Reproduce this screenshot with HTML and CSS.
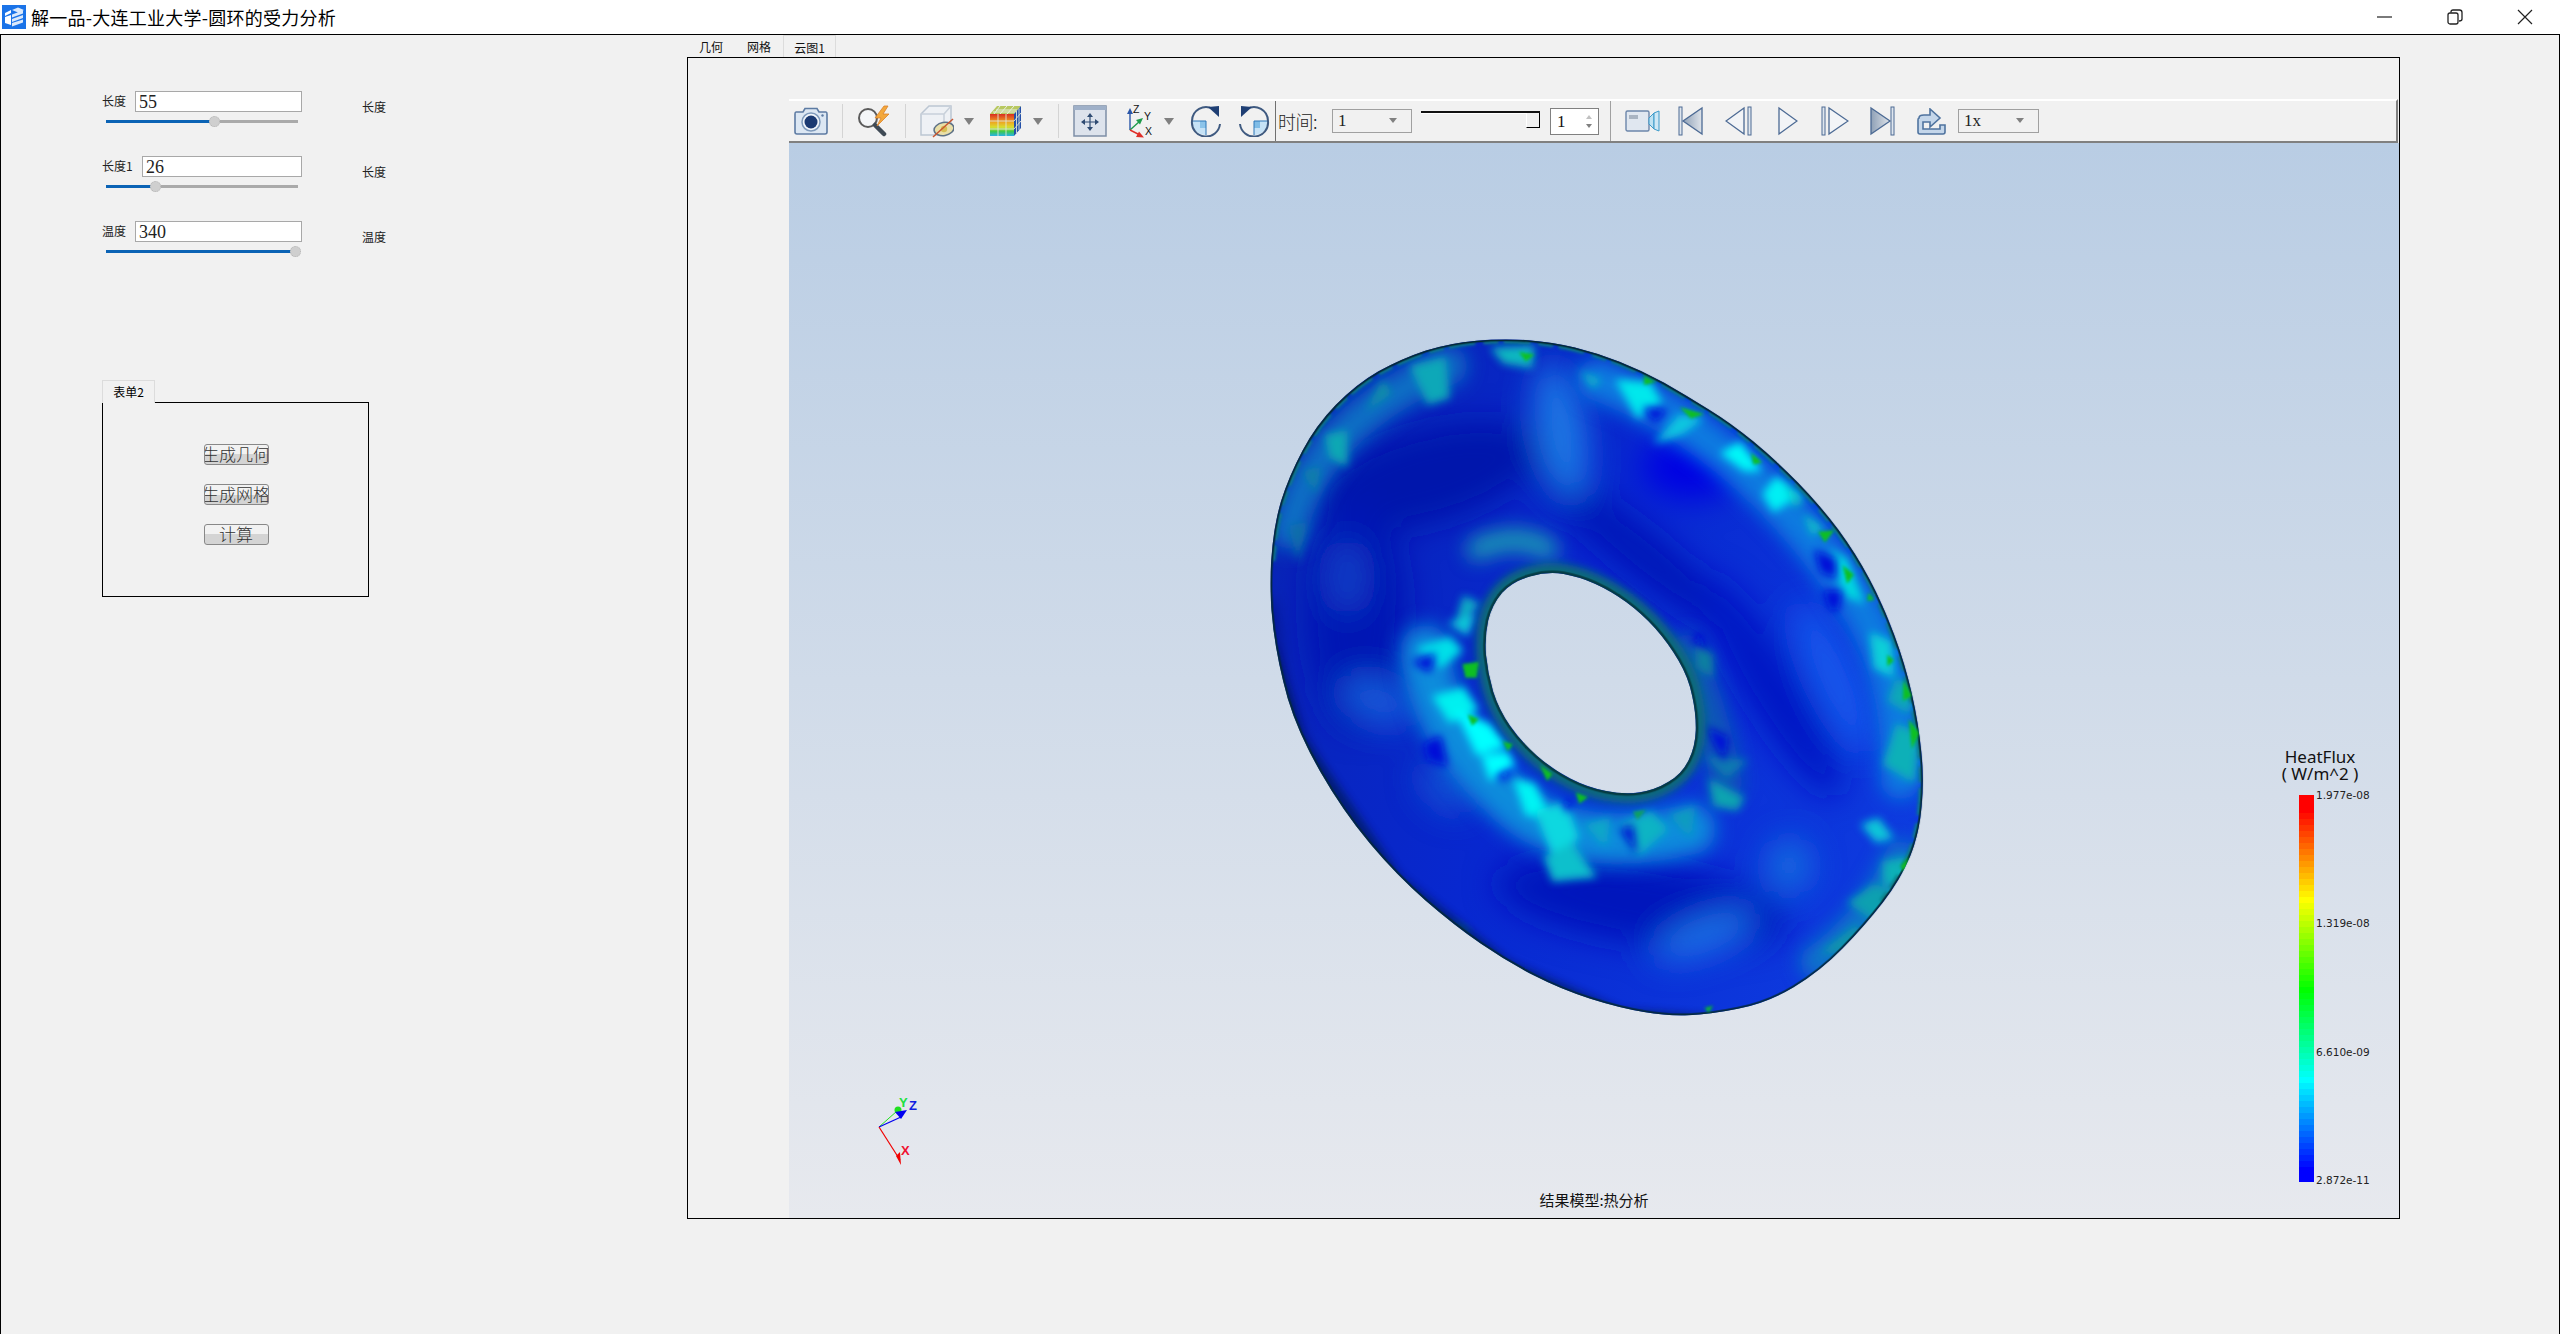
FILE: index.html
```html
<!DOCTYPE html>
<html lang="zh-CN">
<head>
<meta charset="utf-8">
<title>解一品-大连工业大学-圆环的受力分析</title>
<link rel="stylesheet" href="styles.css">
</head>
<body>
<header class="titlebar">
  <svg class="app-icon" width="24" height="24" viewBox="0 0 24 24">
    <rect width="24" height="24" fill="#1a73e8"/>
    <path d="M3 8 L9 5 L9 8 L3 11Z M3 12 L9 10 L9 20 L3 18Z" fill="#fff"/>
    <path d="M10 5 L16 2.500 L22 5 L16 7.500Z M10 9.500 L21 5.500 L21 8.500 L10 12.500Z M10 14 L21 10 L21 13 L10 17Z M10 18 L21 14.500 L21 17.500 L10 21.500Z" fill="#dbe9fb"/>
  </svg>
  <span class="app-title">解一品-大连工业大学-圆环的受力分析</span>
  <div class="win-controls">
    <button class="win-btn" aria-label="最小化"><svg width="16" height="16" viewBox="0 0 16 16"><path d="M0 8H15" stroke="#222" stroke-width="1.200"/></svg></button>
    <button class="win-btn" aria-label="还原"><svg width="16" height="16" viewBox="0 0 16 16" fill="none" stroke="#222" stroke-width="1.300"><rect x="1" y="4" width="10" height="11" rx="2"/><path d="M4 3.500V2.800Q4 1 6 1H12.500Q15 1 15 3.500V10Q15 12 12 12"/></svg></button>
    <button class="win-btn" aria-label="关闭"><svg width="16" height="16" viewBox="0 0 16 16"><path d="M1 1L15 15M15 1L1 15" stroke="#222" stroke-width="1.200"/></svg></button>
  </div>
</header>

<main class="client">
  <section class="side">
    <div class="params">
      <div class="param">
        <div class="param-main">
          <div class="param-input"><label class="param-label">长度</label><span class="value-box">55</span></div>
          <div class="slider"><div class="slider-fill" style="width:56.3%"></div><div class="slider-thumb" style="left:56.3%"></div></div>
        </div>
        <span class="param-unit">长度</span>
      </div>
      <div class="param">
        <div class="param-main">
          <div class="param-input"><label class="param-label param-label-wide">长度1</label><span class="value-box">26</span></div>
          <div class="slider"><div class="slider-fill" style="width:25.5%"></div><div class="slider-thumb" style="left:25.5%"></div></div>
        </div>
        <span class="param-unit">长度</span>
      </div>
      <div class="param">
        <div class="param-main">
          <div class="param-input"><label class="param-label">温度</label><span class="value-box">340</span></div>
          <div class="slider"><div class="slider-fill" style="width:98.4%"></div><div class="slider-thumb" style="left:98.4%"></div></div>
        </div>
        <span class="param-unit">温度</span>
      </div>
    </div>

    <div class="form">
      <div class="form-tab">表单2</div>
      <div class="form-box">
        <button class="action">生成几何</button>
        <button class="action">生成网格</button>
        <button class="action">计算</button>
      </div>
    </div>
  </section>

  <section class="workspace">
    <nav class="tabs">
      <span class="tab">几何</span>
      <span class="tab">网格</span>
      <span class="tab tab-active">云图1</span>
    </nav>
    <div class="tab-box">
      <div class="toolbar">
        <svg class="ico ml5" width="34" height="28" viewBox="0 0 34 28">
          <path d="M2 5H9L11 1.500H23L25 5H32Q33 5 33 7V25Q33 27 31 27H3Q1 27 1 25V7Q1 5 2 5Z" fill="#dce7f3" stroke="#5d7ba3" stroke-width="1.600"/>
          <circle cx="17" cy="15" r="9" fill="#f2f6fb" stroke="#7f9abb" stroke-width="1.500"/>
          <circle cx="17" cy="15" r="6.500" fill="#1b3a72"/>
          <circle cx="28.500" cy="8.500" r="1.200" fill="#5d7ba3"/>
        </svg>
        <i class="sep ml14"></i>
        <svg class="ico ml14" width="35" height="32" viewBox="0 0 35 32">
          <circle cx="11" cy="13" r="9" fill="#f4f6f8" stroke="#5b5b5b" stroke-width="2"/>
          <path d="M18 20L27 29" stroke="#3f4a55" stroke-width="4.500" stroke-linecap="round"/>
          <path d="M27 1L18 13H24L20 21L32 9H26L31 1Z" fill="#f3a83c" stroke="#d9822b" stroke-width=".8"/>
        </svg>
        <i class="sep ml13"></i>
        <svg class="ico ml14" width="34" height="34" viewBox="0 0 34 34">
          <path d="M1 10L9 2H31V24L24 31H1Z" fill="#eef1f5" stroke="#bcc6d2" stroke-width="1.500"/>
          <path d="M1 10H24V31M24 10L31 2" fill="none" stroke="#c8d0da" stroke-width="1.500"/>
          <ellipse cx="24" cy="25" rx="10" ry="6.500" transform="rotate(-10 24 25)" fill="#e9dfa8" stroke="#5d7186" stroke-width="1.500"/>
          <circle cx="24" cy="25" r="3.200" fill="#d7bd54"/>
          <path d="M13 33L33 15" stroke="#c9552f" stroke-width="1.500"/>
        </svg>
        <i class="drop ml10"></i>
        <svg class="ico ml15" width="33" height="32" viewBox="0 0 33 32">
          <defs>
            <linearGradient id="rainbow" x1="0" x2="0" y1="0" y2="1">
              <stop offset="0" stop-color="#d92d20"/><stop offset=".35" stop-color="#f0a020"/><stop offset=".6" stop-color="#d8df30"/><stop offset=".8" stop-color="#3cc850"/><stop offset="1" stop-color="#28b0e8"/>
            </linearGradient>
          </defs>
          <path d="M1 9L8 1H32L25 9Z" fill="#b8c860"/>
          <path d="M7 5H28M4 7H27M11 1L5 9M18 1L11 9M25 1L18 9" stroke="#e8efe0" fill="none"/>
          <rect x="1" y="9" width="24" height="22" fill="url(#rainbow)"/>
          <path d="M25 9L32 1V23L25 31Z" fill="#2450a8"/>
          <path d="M9 9V31M17 9V31M1 16H25M1 24H25M25 16L32 8M25 24L32 16M27.500 6V28M30 3.500V25" stroke="#dce6d6" stroke-width=".9" fill="none"/>
        </svg>
        <i class="drop ml11"></i>
        <i class="sep ml15"></i>
        <svg class="ico ml14" width="34" height="32" viewBox="0 0 34 32">
          <rect x="1" y="1" width="32" height="30" fill="#dde3ec" stroke="#7d8ea6" stroke-width="1.500"/>
          <rect x="1" y="1" width="32" height="4" fill="#9fb0c8"/>
          <path d="M17 11V23M11 17H23" stroke="#2f4b72" stroke-width="1.200"/>
          <path d="M17 8L14 12H20ZM17 26L14 22H20ZM8 17L12 14V20ZM26 17L22 14V20Z" fill="#2f4b72"/>
        </svg>
        <svg class="ico ml18" width="28" height="34" viewBox="0 0 28 34">
          <path d="M5 26V8" stroke="#2a56a8" stroke-width="1.400"/><path d="M5 4L2 10H8Z" fill="#2a56a8"/>
          <path d="M5 26L15 17" stroke="#1e9a4a" stroke-width="1.400"/><path d="M18 14L11 16L15 20.500Z" fill="#1e9a4a"/>
          <path d="M5 26L15 31" stroke="#e0302a" stroke-width="1.400"/><path d="M19 33.500L11 33L14 27.500Z" fill="#e0302a"/>
          <text class="axis-text" x="8" y="9">Z</text><text class="axis-text" x="19" y="16">Y</text><text class="axis-text" x="20" y="31">X</text>
        </svg>
        <i class="drop ml11"></i>
        <svg class="ico ml16" width="32" height="32" viewBox="0 0 32 32">
          <path d="M2 16A14 14 0 0 0 16 30V16Z" fill="#c6e2f6"/>
          <path d="M10 16H16V23H10Z" fill="#8cc4ea"/>
          <path d="M2 16H16V30" fill="none" stroke="#2d77b8" stroke-width="1"/>
          <path d="M23 4A14 14 0 0 0 2 16A14 14 0 0 0 30 19" fill="none" stroke="#3f5a80" stroke-width="2"/>
          <path d="M18 2L29 1L29 12Z" fill="#1f3f74"/>
        </svg>
        <svg class="ico ml16" width="32" height="32" viewBox="0 0 32 32">
          <path d="M30 16A14 14 0 0 1 16 30V16Z" fill="#c6e2f6"/>
          <path d="M16 30V23H22V16H16Z" fill="#7fbce6"/>
          <path d="M30 16H16V30" fill="none" stroke="#2d77b8" stroke-width="1"/>
          <path d="M9 4A14 14 0 0 1 30 16A14 14 0 0 1 2 19" fill="none" stroke="#3f5a80" stroke-width="2"/>
          <path d="M14 2L3 1L3 12Z" fill="#1f3f74"/>
        </svg>
        <i class="vline ml5"></i>
        <span class="time-label ml2">时间:</span>
        <div class="combo combo-time ml11"><span>1</span><i class="drop drop-small"></i></div>
        <div class="track ml9"><i class="track-line"></i><i class="track-handle"></i></div>
        <div class="spin ml10"><span>1</span><span class="spin-arrows"><i class="spin-up"></i><i class="spin-down"></i></span></div>
        <i class="vline vline-light ml11"></i>
        <svg class="ico ml14" width="35" height="24" viewBox="0 0 35 24">
          <rect x="1" y="2" width="23" height="20" rx="1.500" fill="#e0e7f0" stroke="#6c86aa" stroke-width="1.400"/>
          <rect x="4" y="6" width="9" height="4" fill="#a9b4c2"/>
          <path d="M24 9L29 4V20L24 15Z" fill="#bfe2f2" stroke="#3b9ac9"/>
          <path d="M29 4L34 2V22L29 20Z" fill="#cfe8f5" stroke="#3b9ac9"/>
        </svg>
        <svg class="ico ml18" width="25" height="30" viewBox="0 0 25 30">
          <defs><linearGradient id="pb" x1="0" x2="1" y1="0" y2="0"><stop offset="0" stop-color="#8ea0b6"/><stop offset="1" stop-color="#dfe4ea"/></linearGradient></defs>
          <rect x="1" y="1" width="3" height="28" fill="#dfe6ee" stroke="#4c6a94"/><path d="M24 2V28L5 15Z" fill="url(#pb)" stroke="#4c6a94" stroke-width="1.300"/>
        </svg>
        <svg class="ico ml22" width="27" height="30" viewBox="0 0 27 30">
          <path d="M19 2V28L1 15Z" fill="#f2f4f7" stroke="#4c6a94" stroke-width="1.300"/><rect x="23" y="1" width="3" height="28" fill="#dfe6ee" stroke="#4c6a94"/>
        </svg>
        <svg class="ico ml26" width="20" height="30" viewBox="0 0 20 30">
          <path d="M1 2V28L19 15Z" fill="#f2f4f7" stroke="#4c6a94" stroke-width="1.300"/>
        </svg>
        <svg class="ico ml23" width="28" height="30" viewBox="0 0 28 30">
          <rect x="1" y="1" width="3" height="28" fill="#dfe6ee" stroke="#4c6a94"/><path d="M8 2V28L27 15Z" fill="#f2f4f7" stroke="#4c6a94" stroke-width="1.300"/>
        </svg>
        <svg class="ico ml21" width="25" height="30" viewBox="0 0 25 30">
          <path d="M1 2V28L20 15Z" fill="url(#pb)" stroke="#4c6a94" stroke-width="1.300"/><rect x="21" y="1" width="3" height="28" fill="#dfe6ee" stroke="#4c6a94"/>
        </svg>
        <svg class="ico ml22" width="29" height="27" viewBox="0 0 29 27">
          <path d="M2 10Q1 10 1 12V24Q1 26 3 26H26Q28 26 28 24V17H23V21H6V14H13V19L23 10L13 1V7H7Q2 7 2 10Z" fill="#c4d6ea" stroke="#4f739f" stroke-width="1.600"/>
        </svg>
        <div class="combo combo-speed"><span>1x</span><i class="drop drop-small"></i></div>
      </div>

      <div class="viewport">
        <svg class="torus" viewBox="0 0 1568 1570" preserveAspectRatio="none">
          <defs>
            <path id="outer" d="M645 44Q700 48 750 60Q800 72 850 91Q900 110 950 137Q1000 165 1050 195Q1100 225 1150 265Q1200 305 1250 355Q1300 405 1340 457Q1380 510 1410 565Q1440 620 1465 685Q1490 750 1505 815Q1520 880 1526 940Q1533 1000 1527 1060Q1522 1120 1501 1170Q1480 1220 1440 1270Q1400 1320 1350 1370Q1300 1420 1240 1455Q1180 1490 1115 1502Q1050 1515 1005 1516Q960 1518 905 1509Q850 1500 785 1480Q720 1460 660 1430Q600 1400 540 1360Q480 1320 415 1265Q350 1210 290 1140Q230 1070 180 985Q130 900 107 825Q85 750 75 675Q65 600 70 525Q75 450 92 395Q110 340 140 285Q170 230 215 185Q260 140 310 112Q360 85 415 67Q470 50 530 45Q590 40 645 44Z"/>
            <path id="hole" d="M725 554Q760 560 795 575Q830 590 865 615Q900 640 930 672Q960 705 982 742Q1005 780 1013 820Q1022 860 1021 895Q1020 930 1005 960Q990 990 960 1007Q930 1025 895 1030Q860 1035 820 1027Q780 1020 740 1000Q700 980 665 950Q630 920 605 885Q580 850 567 810Q555 770 551 730Q548 690 556 655Q565 620 587 595Q610 570 650 559Q690 548 725 554Z"/>
            <clipPath id="ring"><path clip-rule="evenodd" d="M645 44Q700 48 750 60Q800 72 850 91Q900 110 950 137Q1000 165 1050 195Q1100 225 1150 265Q1200 305 1250 355Q1300 405 1340 457Q1380 510 1410 565Q1440 620 1465 685Q1490 750 1505 815Q1520 880 1526 940Q1533 1000 1527 1060Q1522 1120 1501 1170Q1480 1220 1440 1270Q1400 1320 1350 1370Q1300 1420 1240 1455Q1180 1490 1115 1502Q1050 1515 1005 1516Q960 1518 905 1509Q850 1500 785 1480Q720 1460 660 1430Q600 1400 540 1360Q480 1320 415 1265Q350 1210 290 1140Q230 1070 180 985Q130 900 107 825Q85 750 75 675Q65 600 70 525Q75 450 92 395Q110 340 140 285Q170 230 215 185Q260 140 310 112Q360 85 415 67Q470 50 530 45Q590 40 645 44Z M725 554Q760 560 795 575Q830 590 865 615Q900 640 930 672Q960 705 982 742Q1005 780 1013 820Q1022 860 1021 895Q1020 930 1005 960Q990 990 960 1007Q930 1025 895 1030Q860 1035 820 1027Q780 1020 740 1000Q700 980 665 950Q630 920 605 885Q580 850 567 810Q555 770 551 730Q548 690 556 655Q565 620 587 595Q610 570 650 559Q690 548 725 554Z"/></clipPath>
            <linearGradient id="base" x1="0" y1=".3" x2="1" y2=".7">
              <stop offset="0" stop-color="#0824b4"/><stop offset=".45" stop-color="#0828d0"/><stop offset="1" stop-color="#0e3ce0"/>
            </linearGradient>
            <filter id="b50" x="-50%" y="-50%" width="200%" height="200%"><feGaussianBlur stdDeviation="36"/></filter>
            <filter id="b20" x="-50%" y="-50%" width="200%" height="200%"><feGaussianBlur stdDeviation="22"/></filter>
            <filter id="b8" x="-50%" y="-50%" width="200%" height="200%"><feGaussianBlur stdDeviation="9"/></filter>
            <filter id="b3" x="-50%" y="-50%" width="200%" height="200%"><feGaussianBlur stdDeviation="3"/></filter>
          </defs>
          <g clip-path="url(#ring)">
            <rect width="1568" height="1570" fill="url(#base)"/>
            <g filter="url(#b50)">
              <ellipse cx="420" cy="340" rx="260" ry="100" transform="rotate(-15 420 340)" fill="#0318ac"/>
              <ellipse cx="260" cy="640" rx="110" ry="250" fill="#0418b4"/>
              <ellipse cx="1010" cy="320" rx="110" ry="70" fill="#0006e4"/>
              <ellipse cx="900" cy="510" rx="300" ry="50" transform="rotate(38 900 510)" fill="#0212b8"/>
              <ellipse cx="1190" cy="800" rx="60" ry="280" transform="rotate(-32 1190 800)" fill="#0216c4"/>
              <ellipse cx="900" cy="1270" rx="330" ry="90" transform="rotate(8 900 1270)" fill="#0212bc"/>
              <ellipse cx="720" cy="240" rx="55" ry="150" transform="rotate(-10 720 240)" fill="#1c78e4"/>
              <ellipse cx="1330" cy="780" rx="50" ry="180" transform="rotate(-25 1330 780)" fill="#1658ec"/>
              <ellipse cx="1040" cy="1340" rx="120" ry="40" transform="rotate(-20 1040 1340)" fill="#1a70e4"/>
              <ellipse cx="310" cy="830" rx="90" ry="50" transform="rotate(20 310 830)" fill="#1658d8"/>
              <ellipse cx="1230" cy="1190" rx="50" ry="60" fill="#186ce0"/>
              <ellipse cx="240" cy="560" rx="40" ry="80" fill="#1240c8"/>
              <ellipse cx="460" cy="1020" rx="70" ry="40" transform="rotate(40 460 1020)" fill="#1654d4"/>
            </g>
            <g filter="url(#b20)" fill="none" stroke-linecap="round">
              <path d="M415 720Q430 900 620 1060Q760 1170 1010 1110" stroke="#0e8cdc" stroke-width="110"/>
              <path d="M800 130Q1150 260 1400 640Q1490 800 1480 1000" stroke="#0e7ce0" stroke-width="90"/>
              <path d="M110 460Q170 220 470 100" stroke="#0e70c4" stroke-width="80"/>
              <path d="M1480 1170Q1420 1310 1290 1400" stroke="#0e78c8" stroke-width="70"/>
              <path d="M530 500Q620 460 690 500" stroke="#1a9cb4" stroke-width="46"/>
              <path d="M1000 720Q1060 850 1090 1010" stroke="#0e5ab4" stroke-width="70"/>
            </g>
            <g filter="url(#b8)" fill="#06e0e8">
              <path d="M395 715L470 690L500 720L450 760Z"/>
              <path d="M430 820L500 800L535 850L470 880Z" fill="#04f0f0"/>
              <path d="M480 850L560 880L600 930L530 950Z" fill="#00ffff"/>
              <path d="M540 950L600 940L620 980L560 1005Z" fill="#00ffff"/>
              <path d="M610 1000L660 1010L700 1090L640 1080Z" fill="#00f4f4"/>
              <path d="M660 1070L730 1050L760 1130L700 1170Z" fill="#08d8e0"/>
              <path d="M680 1170L745 1140L800 1215L700 1225Z" fill="#0ac0cc"/>
              <path d="M770 1100L830 1085L820 1150Z" fill="#0aa8c8"/>
              <path d="M850 1100L920 1070L960 1110L890 1170Z" fill="#0cb4c4"/>
              <path d="M960 1080L1020 1060L1010 1130Z" fill="#0c9cc0"/>
              <path d="M1050 1000L1130 1040L1115 1070L1060 1060Z" fill="#10a4b0"/>
              <path d="M1040 950L1140 960L1090 1000Z" fill="#0a7cb0"/>
              <path d="M500 600L540 620L480 670Z" fill="#10b0c4"/>
              <path d="M465 660L530 640L510 690Z" fill="#10c8d8"/>
              <path d="M1020 700L1060 730L1060 780L1020 760Z" fill="#0c80a0"/>
              <path d="M760 110L810 130L790 150Z" fill="#10b4c8"/>
              <path d="M840 130L920 135L945 180L890 215Z" fill="#00e8ec"/>
              <path d="M925 270L985 205L1040 215L990 250Z" fill="#08c8e0"/>
              <path d="M1075 290L1120 265L1170 330L1130 330Z" fill="#00f8f8"/>
              <path d="M1170 380L1200 340L1260 380L1195 420Z" fill="#00f0f4"/>
              <path d="M1220 350L1265 395L1240 410Z" fill="#10c0c8"/>
              <path d="M1260 420L1310 455L1280 470Z" fill="#10c0c8"/>
              <path d="M1320 500L1360 520L1400 620L1350 600Z" fill="#06d8e0"/>
              <path d="M1410 680L1460 700L1465 780L1420 760Z" fill="#08d0d8"/>
              <path d="M1470 780L1510 800L1500 860L1450 830Z" fill="#10a8b8"/>
              <path d="M1470 880L1525 900L1510 1010L1440 970Z" fill="#10b0b8"/>
              <path d="M1390 1100L1430 1085L1465 1130L1425 1140Z" fill="#08c8d8"/>
              <path d="M1440 1180L1500 1170L1500 1240L1440 1230Z" fill="#10b0b8"/>
              <path d="M1360 1270L1420 1230L1480 1250L1420 1310Z" fill="#10a0b0"/>
              <path d="M1300 1380L1380 1320L1400 1340L1340 1380Z" fill="#1098a8"/>
              <path d="M380 100L460 80L470 170L420 185Z" fill="#10a8b8"/>
              <path d="M560 60L660 55L655 105L590 95Z" fill="#10b8c0"/>
              <path d="M280 200L320 130L340 160Z" fill="#1090a8"/>
              <path d="M190 250L240 240L240 320L200 300Z" fill="#10a8b4"/>
              <path d="M140 330L180 320L170 380Z" fill="#1080a8"/>
              <path d="M110 450L150 440L130 530Z" fill="#1070a8"/>
              <path d="M470 1310L510 1330L500 1360Z" fill="#10908c"/>
            </g>
            <g filter="url(#b8)" fill="#0008d8">
              <path d="M385 745L440 725L425 770Z"/>
              <path d="M410 925L450 905L465 975L420 960Z"/>
              <path d="M570 995L635 965L590 1005Z"/>
              <path d="M1285 500L1335 520L1335 565L1300 550Z"/>
              <path d="M1305 590L1350 590L1340 635L1320 630Z"/>
              <path d="M850 1110L880 1100L890 1170Z"/>
              <path d="M1040 885L1095 910L1085 965Z"/>
              <path d="M720 1040L750 1050L730 1075Z"/>
              <path d="M1030 680L1050 720L1010 700Z"/>
              <path d="M900 190L960 195L930 225Z"/>
            </g>
            <g fill="none">
              <path filter="url(#b20)" d="M470 1410L350 1330L230 1190L120 1000L50 800L30 620" stroke="#001060" stroke-width="80" opacity=".7"/>
              <path filter="url(#b8)" d="M1050 1530L850 1515L600 1410L350 1220L130 910L70 720" stroke="#001a58" stroke-width="24" opacity=".8"/>
              <path filter="url(#b3)" d="M70 525Q75 450 92 395Q110 340 140 285Q170 230 215 185Q260 140 310 112Q360 85 415 67Q470 50 530 45Q590 40 645 44Q700 48 750 60Q800 72 850 91Q900 110 950 137Q1000 165 1050 195Q1100 225 1150 265Q1200 305 1250 355Q1300 405 1340 457Q1380 510 1410 565Q1440 620 1465 685Q1490 750 1505 815Q1520 880 1526 940Q1533 1000 1527 1060Q1522 1120 1501 1170Q1480 1220 1440 1270" stroke="#0c7c84" stroke-width="18" stroke-dasharray="34 12 60 18"/>
              <use href="#hole" filter="url(#b8)" stroke="#0c6c78" stroke-width="44"/>
              <use href="#hole" stroke="#063c44" stroke-width="11"/>
              <use href="#outer" stroke="#052a38" stroke-width="8"/>
            </g>
            <g filter="url(#b3)" fill="#08c020">
              <path d="M498 750L535 745L530 780L505 780Z"/>
              <path d="M510 860L535 870L520 885Z"/>
              <path d="M588 918L612 925L600 940Z"/>
              <path d="M672 970L700 990L688 1005Z"/>
              <path d="M752 1030L780 1040L760 1055Z"/>
              <path d="M880 1072L910 1068L890 1090Z" fill="#10a060"/>
              <path d="M1145 290L1170 310L1150 315Z"/>
              <path d="M1295 462L1332 458L1310 485Z"/>
              <path d="M1350 535L1375 555L1360 575Z"/>
              <path d="M1408 595L1422 610L1405 612Z"/>
              <path d="M905 122L930 135L905 142Z"/>
              <path d="M985 190L1040 205L1010 215Z"/>
              <path d="M1498 870L1522 900L1505 935Z"/>
              <path d="M1486 785L1505 820L1485 830Z"/>
              <path d="M1450 730L1465 742L1450 755Z"/>
              <path d="M625 70L660 75L640 90Z"/>
              <path d="M1480 1190L1500 1170L1490 1210Z"/>
              <path d="M1040 1500L1060 1495L1050 1510Z"/>
            </g>
          </g>
        </svg>

        <svg class="triad" width="80" height="80" viewBox="0 0 80 80">
          <path d="M9 37L27 21" stroke="#1fe01f" stroke-width="1"/>
          <circle cx="28" cy="20" r="3.500" fill="#1fe01f"/>
          <path d="M9 37L31 27" stroke="#0000f0" stroke-width="1.300"/>
          <path d="M25 22L37 20L31 29Z" fill="#0000f0"/>
          <path d="M9 37L30 70" stroke="#f00000" stroke-width="1.200"/>
          <path d="M26 66L30 62L31 75Z" fill="#f00000"/>
          <text class="triad-y" x="29" y="17">Y</text>
          <text class="triad-z" x="39" y="20">Z</text>
          <text class="triad-x" x="31" y="65">X</text>
        </svg>

        <div class="legend">
          <div class="legend-title">HeatFlux<br>(&nbsp;W/m^2&nbsp;)</div>
          <div class="legend-scale">
            <div class="legend-bar"></div>
            <div class="legend-labels"><span>1.977e-08</span><span>1.319e-08</span><span>6.610e-09</span><span>2.872e-11</span></div>
          </div>
        </div>
        <div class="caption">结果模型:热分析</div>
      </div>
    </div>
  </section>
</main>
</body>
</html>
```
FILE: styles.css
```css
* { box-sizing: border-box; }
html, body { margin: 0; height: 100%; }
body {
  display: flex;
  flex-direction: column;
  height: 1334px;
  overflow: hidden;
  background: #f1f1f1;
  color: #111;
  font-family: "Noto Sans CJK SC", "Noto Sans", sans-serif;
  font-size: 12px;
}

/* title bar */
.titlebar { flex: none; height: 34px; display: flex; align-items: center; background: #fff; }
.app-icon { flex: none; margin: 0 5px 0 2px; }
.app-title { font-size: 18px; line-height: 24px; color: #000; letter-spacing: .25px; }
.win-controls { margin-left: auto; display: flex; height: 100%; }
.win-btn { width: 70px; height: 100%; padding: 0; border: 0; background: none; display: flex; align-items: center; justify-content: center; }

/* client area */
.client { flex: 1; display: flex; min-height: 0; border: 1px solid #000; border-bottom: 0; background: #f1f1f1; }
.side { flex: none; width: 686px; }

.params { padding: 56px 0 0 101px; }
.param { display: flex; height: 65px; }
.param-main { width: 200px; }
.param-input { display: flex; height: 21px; }
.param-label { flex: none; width: 33px; font-size: 12px; line-height: 20px; color: #222; }
.param-label-wide { width: 40px; }
.value-box { flex: 1; border: 1px solid #a8a8a8; background: #fff; padding-left: 3px; font-family: "Liberation Serif", "Noto Sans CJK SC", serif; font-size: 18px; line-height: 21px; color: #222; }
.slider { position: relative; width: 192px; height: 3px; margin: 8px 0 0 4px; background: #aaa; }
.slider-fill { height: 100%; background: #0b63b5; }
.slider-thumb { position: absolute; top: -4px; width: 11px; height: 11px; margin-left: -5px; border-radius: 50%; background: #cfcfcf; border: 1px dotted #b5b5b5; }
.param-unit { margin: 9px 0 0 60px; font-size: 12px; line-height: 14px; color: #222; }

.form { margin: 94px 0 0 101px; width: 267px; }
.form-tab { width: 53px; height: 23px; margin-bottom: -1px; border: 1px solid #dcdcdc; border-bottom: 0; background: #f1f1f1; position: relative; text-align: center; font-size: 12px; line-height: 22px; color: #000; }
.form-box { height: 195px; border: 1px solid #000; display: flex; flex-direction: column; align-items: center; gap: 19px; padding: 41px 0 0 1px; }
.action { flex: none; width: 65px; height: 21px; padding: 0; overflow: hidden; white-space: nowrap; display: flex; justify-content: center; border: 1px solid #888; border-radius: 3px; background: linear-gradient(#f2f2f2 50%, #d4d4d4 50%); font-family: "Noto Sans CJK SC", sans-serif; font-weight: 300; font-size: 17px; line-height: 18px; color: #333; }

/* workspace */
.workspace { flex: none; width: 1713px; display: flex; flex-direction: column; }
.tabs { flex: none; height: 22px; display: flex; }
.tab { width: 48px; text-align: center; font-size: 12px; line-height: 23px; color: #111; }
.tab-active { width: 53px; border: 1px solid #dcdcdc; border-bottom: 0; }
.tab-box { height: 1162px; border: 1px solid #000; padding: 41px 0 0 101px; display: flex; flex-direction: column; }

.toolbar { flex: none; height: 44px; margin-right: 1px; display: flex; align-items: center; border-top: 2px solid #fff; border-bottom: 2px solid #808080; border-right: 2px solid #808080; background: #f1f1f1; }
.ico { flex: none; display: block; }
.sep { flex: none; width: 1px; height: 34px; background: #d4d4d4; }
.vline { flex: none; width: 1px; height: 40px; background: #707070; }
.vline-light { background: #a0a0a0; }
.drop { flex: none; width: 0; height: 0; border-left: 5px solid transparent; border-right: 5px solid transparent; border-top: 7px solid #808080; }
.drop-small { position: absolute; right: 14px; top: 8px; border-left-width: 4px; border-right-width: 4px; border-top-width: 5px; }
.axis-text { font-family: "Liberation Sans", sans-serif; font-size: 10.500px; fill: #111; }

.time-label { flex: none; width: 43px; font-family: "Noto Sans CJK SC", sans-serif; font-weight: 300; font-size: 18px; white-space: nowrap; color: #222; letter-spacing: -.5px; }
.combo { flex: none; position: relative; height: 24px; border: 1px solid #a0a0a0; padding-left: 5px; font-family: "Liberation Serif", serif; font-size: 17px; line-height: 22px; color: #222; }
.combo-time { width: 80px; }
.combo-speed { width: 81px; margin-left: 12px; }
.track { flex: none; position: relative; width: 119px; height: 24px; }
.track-line { position: absolute; left: 0; right: 0; top: 2px; height: 3px; background: #111; border-bottom: 1px solid #fff; }
.track-handle { position: absolute; right: 0; top: 4px; width: 14px; height: 15px; background: #f1f1f1; border-right: 1px solid #000; border-bottom: 1px solid #000; border-left: 1px solid #fff; }
.spin { flex: none; display: flex; justify-content: space-between; width: 49px; height: 27px; padding: 0 6px; border: 1px solid #808080; background: #fff; font-family: "Liberation Serif", serif; font-size: 17px; line-height: 25px; }
.spin-arrows { display: flex; flex-direction: column; justify-content: center; gap: 5px; }
.spin-up { width: 0; height: 0; border: 3px solid transparent; border-top: 0; border-bottom: 4px solid #c0c0c0; }
.spin-down { width: 0; height: 0; border: 3px solid transparent; border-bottom: 0; border-top: 4px solid #808080; }

.ml2 { margin-left: 2px; } .ml5 { margin-left: 5px; } .ml9 { margin-left: 9px; } .ml10 { margin-left: 10px; }
.ml11 { margin-left: 11px; } .ml13 { margin-left: 13px; } .ml14 { margin-left: 14px; }
.ml15 { margin-left: 15px; } .ml16 { margin-left: 16px; } .ml18 { margin-left: 18px; } .ml21 { margin-left: 21px; }
.ml22 { margin-left: 22px; } .ml23 { margin-left: 23px; } .ml26 { margin-left: 26px; }

/* 3D viewport: everything inside sits on a free canvas */
.viewport { flex: 1; position: relative; overflow: hidden; background: linear-gradient(#b9cde4, #e7e9ee); }
.torus { position: absolute; left: 451px; top: 177px; width: 700px; height: 720px; }
.triad { position: absolute; left: 81px; top: 947px; overflow: visible; }
.triad-x, .triad-y, .triad-z { font-family: "Liberation Sans", sans-serif; font-weight: 700; font-size: 13px; }
.triad-x { fill: #f01030; } .triad-y { fill: #20e040; } .triad-z { fill: #1020e0; }
.legend { position: absolute; left: 1492px; top: 605px; width: 110px; }
.legend-title { width: 78px; white-space: nowrap; text-align: center; font-family: "Noto Sans", sans-serif; font-size: 17px; line-height: 17px; color: #111; margin-bottom: 13px; }
.legend-scale { display: flex; margin-left: 18px; gap: 2px; }
.legend-bar { flex: none; width: 15px; height: 387px; background: linear-gradient(#f00 18px, #f10 0 24px, #f20 0 30px, #f30 0 36px, #f40 0 42px, #f50 0 48px, #f60 0 54px, #f70 0 60px, #f80 0 66px, #f90 0 72px, #fa0 0 78px, #fb0 0 84px, #fc0 0 90px, #fd0 0 96px, #fe0 0 102px, #ff0 0 108px, #ef0 0 114px, #df0 0 120px, #cf0 0 126px, #bf0 0 132px, #af0 0 138px, #9f0 0 144px, #8f0 0 150px, #7f0 0 156px, #6f0 0 162px, #5f0 0 168px, #4f0 0 174px, #3f0 0 180px, #2f0 0 186px, #1f0 0 192px, #0f0 0 198px, #0f1 0 204px, #0f2 0 210px, #0f3 0 216px, #0f4 0 222px, #0f5 0 228px, #0f6 0 234px, #0f7 0 240px, #0f8 0 246px, #0f9 0 252px, #0fa 0 258px, #0fb 0 264px, #0fc 0 270px, #0fd 0 276px, #0fe 0 282px, #0ff 0 288px, #0ef 0 294px, #0df 0 300px, #0cf 0 306px, #0bf 0 312px, #0af 0 318px, #09f 0 324px, #08f 0 330px, #07f 0 336px, #06f 0 342px, #05f 0 348px, #04f 0 354px, #03f 0 360px, #02f 0 366px, #01f 0 372px, #00f 0 387px); }
.legend-labels { display: flex; flex-direction: column; justify-content: space-between; height: 401px; margin-top: -8px; white-space: nowrap; font-family: "DejaVu Sans", sans-serif; font-size: 10.500px; line-height: 16px; color: #222; }
.caption { position: absolute; left: 0; right: 0; bottom: 9px; text-align: center; font-size: 15px; line-height: 18px; color: #111; }
```
